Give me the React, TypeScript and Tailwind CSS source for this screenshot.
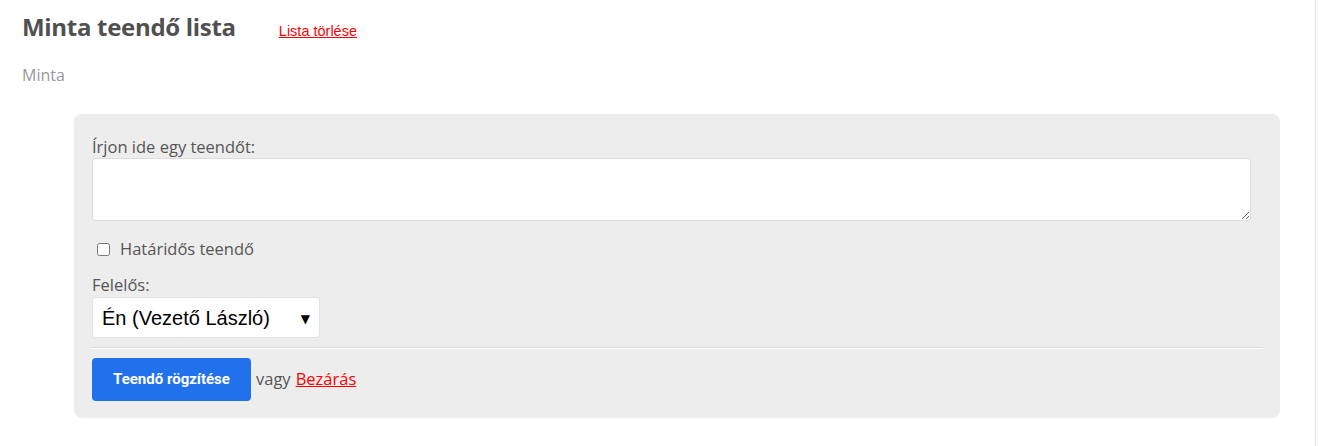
export default function App() {
  const body = { fontFamily: '"Open Sans", "Noto Sans", sans-serif' };

  return (
    <div className="flex min-h-[446px] w-[1318px] bg-white" style={body}>
      <div className="flex-1 pb-[28px]">
        {/* HEADER */}
        <div className="px-[22px] pt-[11px]">
          <div className="flex items-baseline">
            <h1 className="text-[24px] font-bold leading-[32px] text-[#505050] tracking-[-0.3px]">
              Minta teendő lista
            </h1>
            <a href="#" className="ml-[43px] text-[14.5px] text-[#ff0000] underline" style={{ fontFamily: '"Liberation Sans", Arial, sans-serif' }}>
              Lista törlése
            </a>
          </div>
          <p className="mt-[21px] text-[16px] leading-[22px] text-[#999]">Minta</p>
        </div>

        {/* FORM CARD */}
        <div className="ml-[74px] mt-[28px] w-[1206px] rounded-lg bg-[#ededed] pl-[18px] pr-[17px] pt-[22px] pb-[17px]">
          <label className="block text-[16.5px] leading-[22px] text-[#555]">Írjon ide egy teendőt:</label>
          <textarea className="block h-[63px] w-[1159px] rounded-[3px] border border-[#dcdcdc] bg-white" />

          <label className="mt-[17px] flex items-center gap-[10px] text-[16.5px] leading-[22px] text-[#555]">
            <input type="checkbox" className="ml-[5px] h-[13px] w-[13px]" />
            Határidős teendő
          </label>

          <label className="mt-[14px] block text-[16.5px] leading-[22px] text-[#555]">Felelős:</label>
          <div className="relative mt-[1px] flex h-[41px] w-[228px] items-center rounded-[3px] border border-[#e2e2e2] bg-white pl-[9px]">
            <span className="text-[20px] text-black" style={{ fontFamily: '"Liberation Sans", Arial, sans-serif' }}>
              Én (Vezető László)
            </span>
            <span className="absolute right-[9px] top-[12px] text-[12px] text-black" style={{ fontFamily: '"DejaVu Sans", sans-serif' }}>▼</span>
          </div>

          <div className="mt-[9px] border-t border-[#d8d8d8] border-b border-b-white" />

          <div className="mt-[9px] flex items-center">
            <button className="h-[43px] w-[159px] rounded-[4px] bg-[#2271ec] text-[15px] font-bold text-white" style={{ fontFamily: 'Roboto, sans-serif' }}>
              Teendő rögzítése
            </button>
            <span className="ml-[5px] text-[16.5px] text-[#555]">vagy</span>
            <a href="#" className="ml-[5px] text-[16.5px] text-[#ff0000] underline">Bezárás</a>
          </div>
        </div>
      </div>
      <div className="w-[3px] border-l border-[#e4e4e4] bg-[#fafafa]" />
    </div>
  );
}
